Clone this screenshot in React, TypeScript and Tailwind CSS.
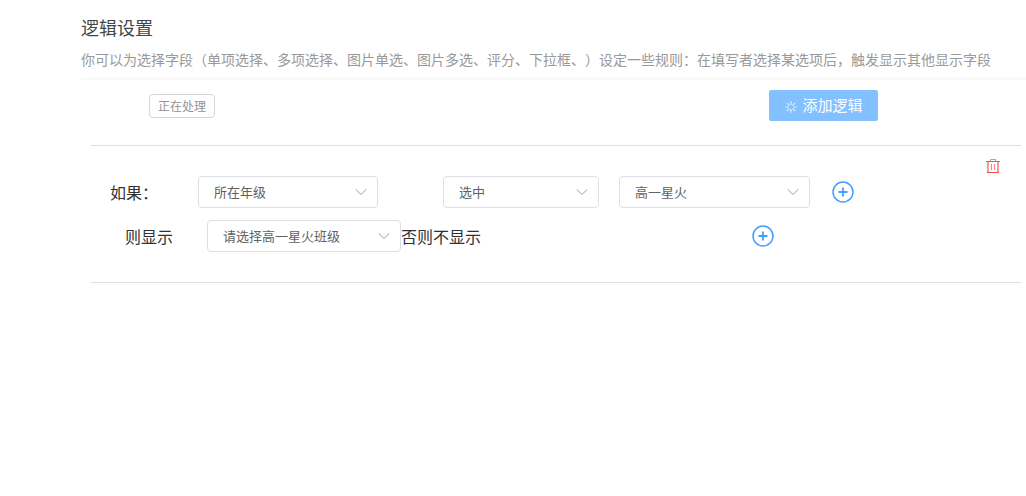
import { useState } from "react";

const SPOKES = [0, 45, 90, 135, 180, 225, 270, 315];

function LoadingIcon() {
  return (
    <svg
      viewBox="0 0 14 14"
      className="mt-[3px] h-3.5 w-3.5 shrink-0"
      stroke="currentColor"
      strokeWidth="1.2"
      strokeLinecap="round"
      strokeOpacity="0.8"
      aria-hidden="true"
    >
      {SPOKES.map((angle) => (
        <path key={angle} d="M7 1.8V4.4" transform={`rotate(${angle} 7 7)`} />
      ))}
    </svg>
  );
}

function TrashIcon() {
  return (
    <svg viewBox="0 0 14 14" className="h-3.5 w-3.5" fill="none" aria-hidden="true">
      <path d="M0 2.5H14" stroke="#f74a4a" />
      <path d="M4.5 2.5V0.5H9.5V2.5" stroke="#f98080" />
      <path d="M2 3V13M12 3V13" stroke="#fb9c9c" strokeWidth="2" />
      <path d="M1 13.5H13" stroke="#f74a4a" />
      <path d="M5.5 5V11M8.5 5V11" stroke="#f98080" />
    </svg>
  );
}

function AddButton({ label }: { label: string }) {
  return (
    <button type="button" aria-label={label} className="h-[22px] w-[22px] text-[#409eff]">
      <svg
        viewBox="0 0 22 22"
        className="h-full w-full"
        fill="none"
        stroke="currentColor"
        aria-hidden="true"
      >
        <circle cx="11" cy="11" r="10" strokeWidth="1.5" />
        <path d="M6.5 11H15.5M11 6.5V15.5" strokeWidth="1.8" />
      </svg>
    </button>
  );
}

type SelectProps = {
  id: string;
  label?: string;
  options: string[];
};

function Select({ id, label, options }: SelectProps) {
  const [value, setValue] = useState(options[0]);

  return (
    <div className="relative">
      <select
        id={id}
        aria-label={label}
        value={value}
        onChange={(event) => setValue(event.target.value)}
        className="block h-8 w-full appearance-none rounded-[4px] border border-[#dcdfe6] bg-white pr-8 pl-[15px] text-[13px] text-[#606266] outline-none focus:border-[#409eff]"
      >
        {options.map((option) => (
          <option key={option}>{option}</option>
        ))}
      </select>
      <svg
        viewBox="0 0 12 12"
        className="pointer-events-none absolute top-[10px] right-[11px] h-3 w-3"
        fill="none"
        stroke="#c0c4cc"
        aria-hidden="true"
      >
        <path d="M0.8 3.5L6 8.5L11.2 3.5" strokeWidth="1.1" />
      </svg>
    </div>
  );
}

export default function App() {
  return (
    <main className="min-h-screen bg-white pl-[81px] font-['Noto_Sans_CJK_SC',sans-serif] text-[#303133] [text-spacing-trim:space-all]">
      <header className="pt-[15px]">
        <h1 className="text-lg leading-6 text-[#444444]">逻辑设置</h1>
        <p className="mt-2 text-sm leading-6 text-[#999999]">
          你可以为选择字段（单项选择、多项选择、图片单选、图片多选、评分、下拉框、）设定一些规则：在填写者选择某选项后，触发显示其他显示字段
        </p>
        <div className="mt-[5px] h-1 bg-linear-to-b from-white to-[#f8f8f8]" />
      </header>

      <div className="mr-[5px] ml-[10px]">
        <div className="grid grid-cols-[678fr_252fr] items-start border-b border-[#dcdfe6] pt-[10px] pb-6">
          <span className="mt-1 ml-[58px] h-6 justify-self-start rounded-[4px] border border-[#d3d4d6] px-2 text-xs leading-[22px] text-[#909399]">
            正在处理
          </span>
          <button
            type="button"
            disabled
            className="flex h-[31px] w-[109px] items-center justify-center gap-1 rounded-[2px] bg-[#83c0ff] text-[15px] text-white"
          >
            <LoadingIcon />
            添加逻辑
          </button>
        </div>

        <section className="border-b border-[#dcdfe6] pt-[13px] pb-[30px]">
          <div className="flex justify-end pr-[21px]">
            <button type="button" aria-label="删除" className="h-3.5">
              <TrashIcon />
            </button>
          </div>

          <div className="mt-[3px] ml-[19px] grid grid-cols-[88px_245fr_176fr_213fr_189fr] items-center">
            <label htmlFor="field" className="leading-6">
              如果：
            </label>
            <div className="pr-[65px]">
              <Select id="field" options={["所在年级"]} />
            </div>
            <div className="pr-5">
              <Select id="operator" label="条件" options={["选中", "未选中"]} />
            </div>
            <div className="pr-[22px]">
              <Select id="option" label="选项" options={["高一星火"]} />
            </div>
            <AddButton label="添加条件" />
          </div>

          <div className="mt-3 ml-[34px] grid grid-cols-[82px_194fr_351fr_269fr] items-center">
            <label htmlFor="target" className="leading-6">
              则显示
            </label>
            <Select id="target" options={["请选择高一星火班级"]} />
            <span className="leading-6">否则不显示</span>
            <AddButton label="添加显示字段" />
          </div>
        </section>
      </div>
    </main>
  );
}
